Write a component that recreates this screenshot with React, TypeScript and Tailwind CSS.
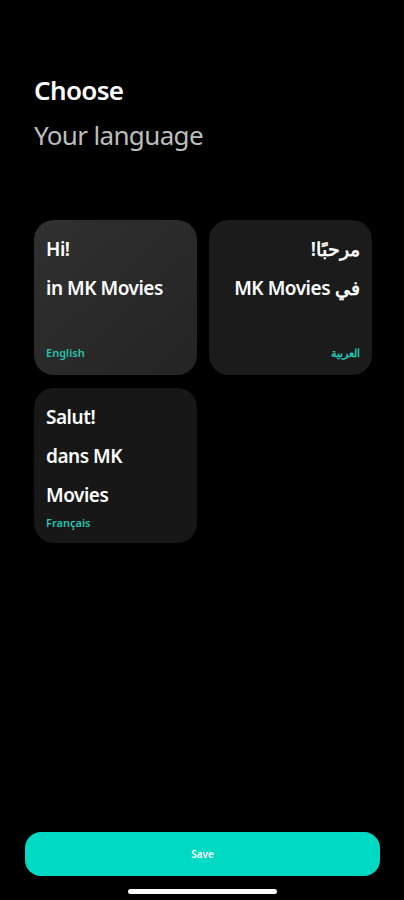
const LANGS = [
  { lines: ["Hi!", "in MK Movies"], label: "English", dir: "ltr", active: true },
  { lines: ["مرحبًا!", "في MK Movies"], label: "العربية", dir: "rtl", active: false },
  { lines: ["Salut!", "dans MK", "Movies"], label: "Français", dir: "ltr", active: false },
];

export default function App() {
  return (
    <div
      className="flex h-[900px] w-full flex-col bg-black text-white"
      style={{ fontFamily: '"Noto Sans", "Open Sans", sans-serif' }}
    >
      <div className="px-[34px] pt-[70px]">
        <h1 className="text-[26px] font-semibold leading-[40px] tracking-tight text-white">Choose</h1>
        <h2 className="mt-[5px] text-[26px] font-normal leading-[40px] tracking-tight text-[#bdbdbd]">
          Your language
        </h2>
      </div>

      <div className="mt-[65px] grid w-[372px] grid-cols-2 gap-x-[12px] gap-y-[13px] pl-[34px]">
        {LANGS.map((l) => (
          <div
            key={l.label}
            dir={l.dir}
            className={
              "flex h-[155px] flex-col rounded-[20px] px-[12px] pb-[14px] pt-[10px] " +
              (l.active
                ? "bg-gradient-to-br from-[#303030] to-[#242424]"
                : l.dir === "rtl"
                  ? "bg-[#1b1b1b]"
                  : "bg-[#171717]")
            }
          >
            {l.lines.map((t) => (
              <p key={t} className="text-[19px] font-semibold leading-[39px] tracking-tight text-white">
                {t}
              </p>
            ))}
            <span className="mt-auto text-[11px] font-semibold text-[#26c4ae]">{l.label}</span>
          </div>
        ))}
      </div>

      <div className="mt-auto px-[25px] pr-[24px]">
        <button className="flex h-[44px] w-full items-center justify-center rounded-[16px] bg-[#00d9c4] text-[10px] font-semibold text-white">
          Save
        </button>
      </div>
      <div className="flex justify-center pb-[6px] pt-[13px]">
        <div className="h-[5px] w-[149px] rounded-full bg-white" />
      </div>
    </div>
  );
}
